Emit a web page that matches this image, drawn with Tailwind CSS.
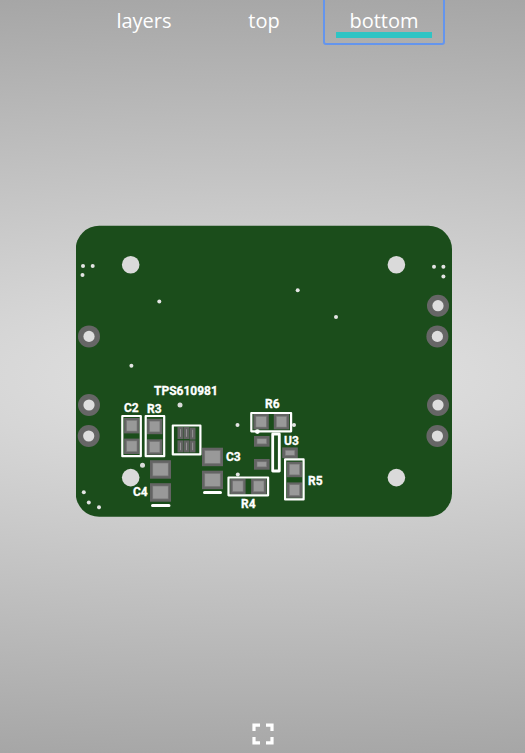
<!DOCTYPE html>
<html lang="en">
<head>
<meta charset="utf-8">
<meta name="viewport" content="width=device-width, initial-scale=1">
<title>Board viewer</title>
<script src="https://cdn.jsdelivr.net/npm/@tailwindcss/browser@4"></script>
</head>
<body class="flex min-h-screen flex-col overflow-hidden bg-[radial-gradient(ellipse_1500px_440px_at_center,#e4e4e4,#9d9d9d)] font-['Open_Sans',sans-serif] text-white">
<nav class="-mt-1 flex h-12 justify-center pl-[3px] text-xl" aria-label="Board views">
  <button type="button" class="flex w-30 flex-col items-center px-3 pt-[13px]"><span class="leading-[23px]">layers</span></button>
  <button type="button" class="flex w-30 flex-col items-center px-3 pt-[13px]"><span class="leading-[23px]">top</span></button>
  <button type="button" aria-pressed="true" class="flex w-30 flex-col items-center rounded-xs px-3 pt-[13px] outline-2 -outline-offset-1 outline-[#6495ed]"><span class="w-full border-b-6 border-[#2fc4c4] leading-[23px]">bottom</span></button>
</nav>
<main class="flex flex-1 items-center justify-center pl-[3px]">
<svg class="h-auto w-full max-w-[376px]" viewBox="76 225 376 292" role="img" aria-label="Bottom of the circuit board">
  <defs>
    <g id="ring"><circle r="11" fill="#666"/><circle r="5.6" fill="#dedede"/></g>
    <g id="pad"><rect width="15.4" height="15.4" fill="#646464"/><rect x="2.5" y="2.3" width="10.4" height="10.8" fill="#999" stroke="#777" stroke-width=".6"/></g>
    <g id="large"><rect width="21" height="18.5" fill="#646464"/><rect x="2.8" y="2.8" width="15.4" height="12.9" fill="#999" stroke="#777" stroke-width=".6"/></g>
    <g id="small"><rect width="15.6" height="10.7" fill="#646464"/><rect x="3" y="2.8" width="9.6" height="5.1" fill="#999" stroke="#777" stroke-width=".6"/></g>
    <g id="pin"><rect width="5.8" height="12" fill="#626262"/><rect x="2.5" y="2.2" width=".9" height="7.6" fill="#999"/></g>
  </defs>
  <rect x="75.700" y="225.8" width="376.3" height="291" rx="23.5" fill="#1b4d1b"/>
  <g fill="#dadada">
    <circle cx="130.7" cy="264.8" r="8.8"/><circle cx="396.4" cy="264.8" r="8.8"/>
    <circle cx="130.7" cy="477.6" r="8.8"/><circle cx="396.4" cy="477.6" r="8.8"/>
    <circle cx="180" cy="405" r="2.5"/><circle cx="142.5" cy="465.3" r="2.5"/>
  </g>
  <g fill="#e4e4e4">
    <circle cx="83" cy="266" r="2"/><circle cx="92.7" cy="266" r="2"/><circle cx="82.5" cy="275" r="2"/>
    <circle cx="434" cy="266.8" r="2"/><circle cx="443.4" cy="266.8" r="2"/><circle cx="443.4" cy="276.5" r="2"/>
    <circle cx="159.3" cy="301.6" r="2"/><circle cx="297.7" cy="290.2" r="2"/><circle cx="336" cy="317" r="2"/>
    <circle cx="131.4" cy="365.8" r="2"/><circle cx="237.5" cy="425" r="2"/><circle cx="294" cy="425" r="2"/><circle cx="237.8" cy="474.5" r="2"/>
    <circle cx="83.8" cy="492.3" r="2"/><circle cx="88.8" cy="502.6" r="2"/><circle cx="99" cy="507.2" r="2"/>
  </g>
  <use href="#ring" x="89" y="336.4"/><use href="#ring" x="89" y="405"/><use href="#ring" x="88.7" y="436"/>
  <use href="#ring" x="438" y="305.7"/><use href="#ring" x="437.4" y="336.4"/><use href="#ring" x="438" y="405"/><use href="#ring" x="437.4" y="436"/>
  <use href="#pad" x="124.1" y="418"/><use href="#pad" x="124.1" y="438.6"/>
  <use href="#pad" x="147" y="418.8"/><use href="#pad" x="147" y="439.3"/>
  <use href="#pad" x="253.4" y="414"/><use href="#pad" x="273.8" y="414"/>
  <use href="#pad" x="230.2" y="478.6"/><use href="#pad" x="251.1" y="478.6"/>
  <use href="#pad" x="286.8" y="461.8"/><use href="#pad" x="286.8" y="482.4"/>
  <use href="#large" x="150" y="460.2"/><use href="#large" x="150" y="483.2"/>
  <use href="#large" x="202" y="447.7"/><use href="#large" x="202" y="470.7"/>
  <use href="#small" x="254" y="436"/><use href="#small" x="254" y="459"/><use href="#small" x="282.2" y="447.4"/>
  <use href="#pin" x="177.5" y="427"/><use href="#pin" x="183.6" y="427"/><use href="#pin" x="189.7" y="427.6"/>
  <use href="#pin" x="177.5" y="440.4"/><use href="#pin" x="183.6" y="440.4"/><use href="#pin" x="189.7" y="440.4"/>
  <g fill="none" stroke="#fff" stroke-width="2.2" stroke-linejoin="round" stroke-linecap="round">
    <rect x="122.3" y="416" width="18.5" height="40.2"/><rect x="145.7" y="416" width="18.5" height="40.2"/>
    <rect x="172.8" y="425.5" width="27.6" height="28.9"/><rect x="251.3" y="413" width="39.8" height="18.3"/>
    <rect x="228.5" y="477.5" width="39.6" height="17.8"/><rect x="285.1" y="459.4" width="18.5" height="40"/>
    <rect x="272.7" y="434" width="6.6" height="37" stroke-width="2.8"/>
    <path d="M152.5 505.4H169M204.500 492.500H220.500" stroke-width="3"/>
  </g>
  <circle cx="257.4" cy="431.6" r="2.4" fill="#fff"/>
  <g class="font-['Roboto',sans-serif] text-[12px] font-bold" fill="#fff" stroke="#fff" stroke-width=".3">
    <text x="154" y="395">TPS610981</text><text x="124" y="412">C2</text><text x="147" y="413">R3</text>
    <text x="133" y="496">C4</text><text x="226" y="461">C3</text><text x="265" y="408">R6</text>
    <text x="284" y="445">U3</text><text x="308" y="485">R5</text><text x="241" y="508">R4</text>
  </g>
</svg>
</main>
<footer class="flex h-[55px] items-end justify-center pb-2">
  <button type="button" aria-label="Full screen"><svg class="block size-[22px]" viewBox="0 0 22 22" fill="none" stroke="#fff" stroke-width="3.200"><path d="M2 8V2.200H8M14 2.200H20V8M20 14V19.800H14M8 19.800H2V14"/></svg></button>
</footer>
</body>
</html>
